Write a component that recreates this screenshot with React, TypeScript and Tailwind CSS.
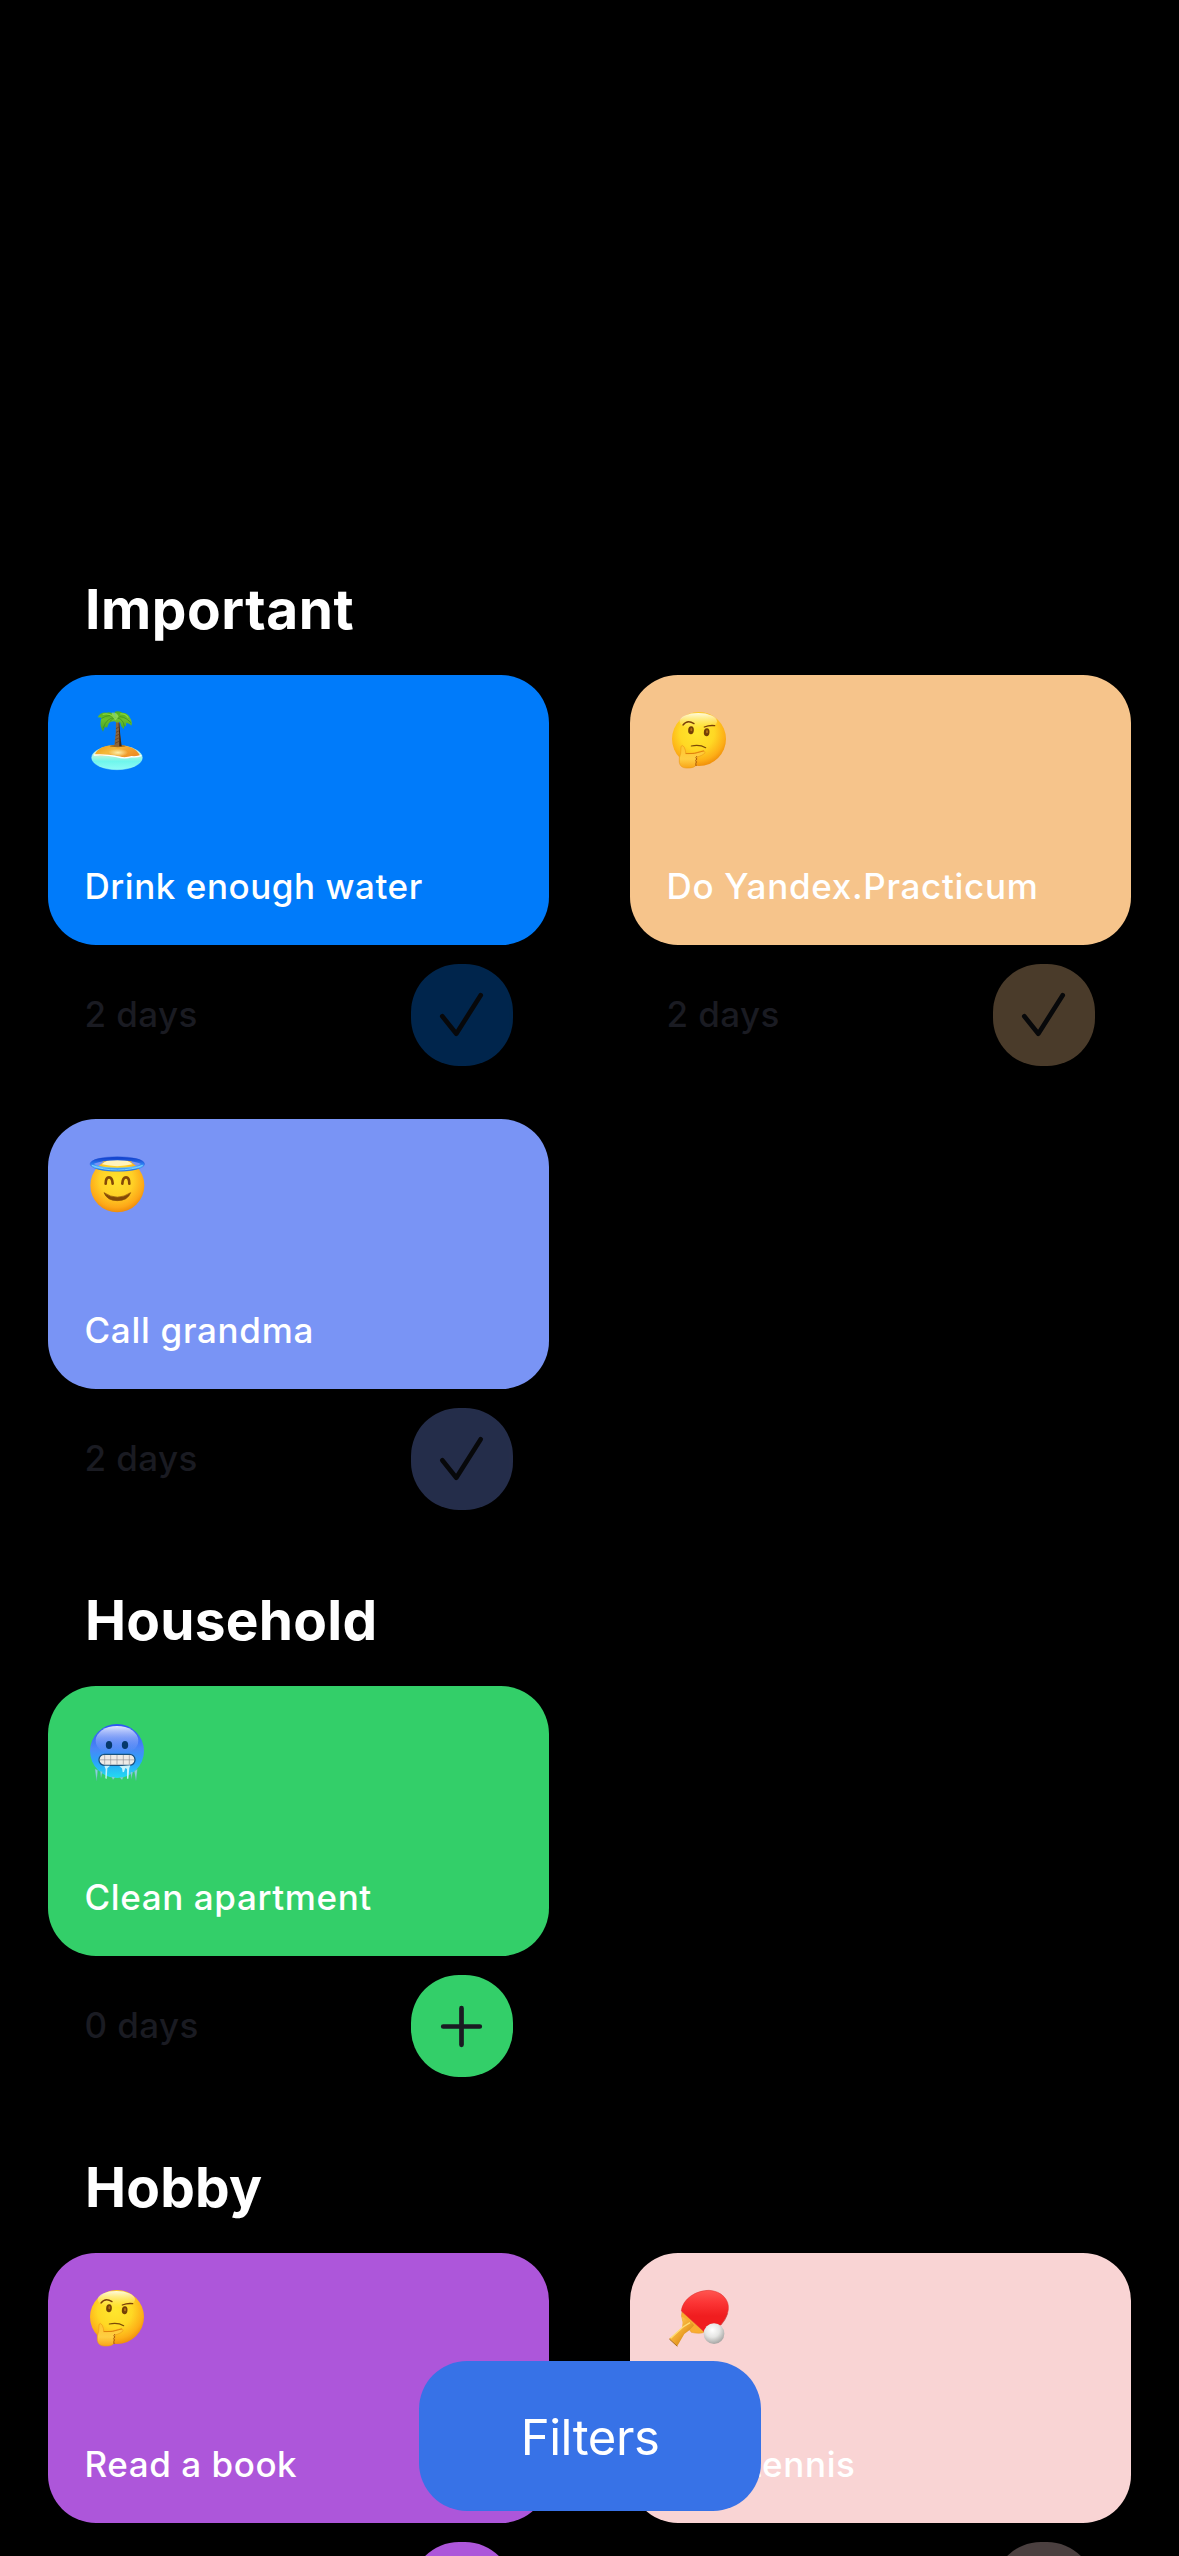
import type { ReactNode } from 'react';

function Island() {
  return (
    <svg role="img" aria-label="Desert island" viewBox="42 63 216 216" className="size-[72px]">
      <defs>
        <linearGradient id="isl-sea" x1="0" y1="0" x2="0" y2="1">
          <stop offset="0.3" stopColor="#d9f3d6" />
          <stop offset="0.65" stopColor="#6ff6ec" />
          <stop offset="1" stopColor="#8ffbf6" />
        </linearGradient>
        <linearGradient id="isl-sand" x1="0" y1="0" x2="1" y2="0.5">
          <stop offset="0" stopColor="#e8940c" />
          <stop offset="0.45" stopColor="#f5b93c" />
          <stop offset="1" stopColor="#ef8f24" />
        </linearGradient>
        <linearGradient id="isl-leaf" x1="0" y1="0" x2="0" y2="1">
          <stop offset="0" stopColor="#4fae1c" />
          <stop offset="0.4" stopColor="#6cc02c" />
          <stop offset="1" stopColor="#3fa02a" />
        </linearGradient>
        <radialGradient id="isl-glow">
          <stop offset="0" stopColor="#fdf0ad" />
          <stop offset="1" stopColor="#fdf0ad" stopOpacity="0" />
        </radialGradient>
      </defs>
      <ellipse cx="141" cy="203" rx="76" ry="36" fill="url(#isl-sea)" stroke="#9cf3f5" strokeWidth="1.5" />
      <path d="M74 194 Q86 164 142 164 Q198 166 210 198 Q196 202 186 199 Q172 208 152 200 Q120 192 98 197 Z" fill="url(#isl-sand)" />
      <ellipse cx="144" cy="188" rx="30" ry="12" fill="url(#isl-glow)" />
      <path d="M73 195 Q112 193 140 200 Q164 207 185 200 Q200 202 213 197" fill="none" stroke="#fff" strokeWidth="4" strokeLinecap="round" />
      <ellipse cx="143" cy="168" rx="24" ry="3.5" fill="#7d4a14" opacity="0.7" />
      <path d="M138 90 L147 90 Q149 130 154 169 L133 169 Q139 130 138 90Z" fill="#8a643c" />
      <path d="M148 100 Q150 135 155 169 L148 169 Q148 130 146 100Z" fill="#3f2410" />
      <path d="M138 116l9-5M138 127l10-5M137 138l12-6M136 149l14-7M135 160l16-8" stroke="#5a3a1c" strokeWidth="2" />
      <path d="M139 86 Q128 62 110 68 Q90 66 83 82 L95 83 Q90 94 92 108 Q94 116 99 125 L105 110 L111 113 L117 99 L123 95 L133 94 L141 98 L150 95 Q152 109 161 118 L164 107 L168 109 L169 98 Q180 101 184 107 Q189 96 180 83 Q173 68 157 68 Q146 62 134 65Z" fill="url(#isl-leaf)" />
      <path d="M139 83 Q118 70 95 85 M139 83 Q111 80 99 115 M141 83 Q158 73 183 98 M142 84 Q160 87 163 109 M139 82 Q126 86 119 95" fill="none" stroke="#2b7a1a" strokeWidth="1.5" />
      <path d="M125 68 Q141 66 146 81 L136 91 Q125 80 125 68Z" fill="#9ae05c" opacity="0.75" />
      <path d="M98 73 Q116 68 129 79 M151 72 Q166 70 175 83" fill="none" stroke="#8ad53d" strokeWidth="4" />
    </svg>
  );
}

function Thinking() {
  return (
    <svg role="img" aria-label="Thinking face" viewBox="48 63 216 216" className="size-[72px]">
      <defs>
        <radialGradient id="thk-face" cx="0.46" cy="0.38" r="0.64">
          <stop offset="0" stopColor="#ffe72e" />
          <stop offset="0.5" stopColor="#ffd824" />
          <stop offset="0.82" stopColor="#fdae17" />
          <stop offset="1" stopColor="#ee8b08" />
        </radialGradient>
        <linearGradient id="thk-shine" x1="0" y1="0" x2="0" y2="1">
          <stop offset="0" stopColor="#fffbe0" />
          <stop offset="1" stopColor="#fff06a" stopOpacity="0" />
        </linearGradient>
        <linearGradient id="thk-hand" x1="0" y1="0" x2="0" y2="1">
          <stop offset="0" stopColor="#ffc52e" />
          <stop offset="0.6" stopColor="#ffce42" />
          <stop offset="1" stopColor="#f8a519" />
        </linearGradient>
      </defs>
      <circle cx="147" cy="147" r="81" fill="url(#thk-face)" />
      <ellipse cx="145" cy="94" rx="56" ry="25" fill="url(#thk-shine)" />
      <path d="M99 105 Q112 88 132 101" fill="none" stroke="#7a3e08" strokeWidth="4" strokeLinecap="round" />
      <path d="M163 111 Q178 105 194 107" fill="none" stroke="#7a3e08" strokeWidth="4" strokeLinecap="round" />
      <ellipse cx="123" cy="121" rx="8.5" ry="12" fill="#744006" transform="rotate(5 123 121)" />
      <ellipse cx="170" cy="127" rx="8.5" ry="12" fill="#744006" transform="rotate(5 170 127)" />
      <ellipse cx="124" cy="119" rx="3" ry="5" fill="#b27016" />
      <ellipse cx="171" cy="125" rx="3" ry="5" fill="#b27016" />
      <path d="M124 168 Q148 162 167 173" fill="none" stroke="#7a4a08" strokeWidth="3.5" strokeLinecap="round" />
      <path d="M93 169 Q98 163 103 172 Q108 184 107 190 Q124 193 156 183 Q168 182 164 190 Q158 196 142 201 L139 224 Q134 235 109 234 Q91 234 88 217 Q86 203 92 190Z" fill="url(#thk-hand)" stroke="#ef9c16" strokeWidth="2" />
      <path d="M108 191 Q132 194 161 183" fill="none" stroke="#dc7808" strokeWidth="2.5" strokeLinecap="round" />
      <path d="M140 199 q-5 4 0 8 q-5 4 -1 9 q-3 4 -1 11" fill="none" stroke="#a95205" strokeWidth="3" strokeLinecap="round" />
    </svg>
  );
}

function Halo() {
  return (
    <svg role="img" aria-label="Smiling face with halo" viewBox="42 60 216 216" className="size-[72px]">
      <defs>
        <radialGradient id="hal-face" cx="0.48" cy="0.4" r="0.62">
          <stop offset="0" stopColor="#ffe22c" />
          <stop offset="0.5" stopColor="#ffd026" />
          <stop offset="0.82" stopColor="#fda818" />
          <stop offset="1" stopColor="#ec8608" />
        </radialGradient>
        <linearGradient id="hal-ring" x1="0" y1="0" x2="0" y2="1">
          <stop offset="0" stopColor="#1747cf" />
          <stop offset="0.5" stopColor="#2c7df2" />
          <stop offset="0.8" stopColor="#62c0ff" />
          <stop offset="1" stopColor="#2d86ef" />
        </linearGradient>
      </defs>
      <circle cx="142" cy="151" r="81" fill="url(#hal-face)" />
      <path d="M95 88 Q112 71 142 71 Q172 71 188 88 Q142 99 95 88Z" fill="#fff4bd" />
      <path d="M98 80 Q118 71 142 71 Q165 71 185 80" fill="none" stroke="#f0bc3d" strokeWidth="4" />
      <ellipse cx="142" cy="87" rx="76" ry="16.5" fill="none" stroke="url(#hal-ring)" strokeWidth="11" />
      <path d="M66 91 Q98 105 142 105 Q188 105 218 91" fill="none" stroke="#7bd4ff" strokeWidth="3" />
      <ellipse cx="142" cy="87" rx="82" ry="22" fill="none" stroke="#1f53d8" strokeWidth="1.5" opacity="0.7" />
      <path d="M107 146 Q107 127 117 127 Q127 127 128 146" fill="none" stroke="#844907" strokeWidth="8" strokeLinecap="round" />
      <path d="M157 146 Q158 127 168 127 Q178 127 178 146" fill="none" stroke="#844907" strokeWidth="8" strokeLinecap="round" />
      <path d="M102 173 Q142 200 182 173 Q173 197 142 197 Q111 197 102 173Z" fill="#844907" stroke="#844907" strokeWidth="2" strokeLinejoin="round" />
    </svg>
  );
}

function Cold() {
  return (
    <svg role="img" aria-label="Cold face" viewBox="42 66 216 216" className="size-[72px]">
      <defs>
        <linearGradient id="cld-face" x1="0" y1="0" x2="0" y2="1">
          <stop offset="0" stopColor="#2b55f2" />
          <stop offset="0.45" stopColor="#4a86f6" />
          <stop offset="0.7" stopColor="#2ba3fa" />
          <stop offset="1" stopColor="#22dcf2" />
        </linearGradient>
        <linearGradient id="cld-shine" x1="0" y1="0" x2="0" y2="1">
          <stop offset="0" stopColor="#dfe6ff" />
          <stop offset="0.4" stopColor="#a8bcf9" stopOpacity="0.6" />
          <stop offset="0.9" stopColor="#7fa4f7" stopOpacity="0" />
        </linearGradient>
      </defs>
      <circle cx="141" cy="153" r="81" fill="url(#cld-face)" />
      <ellipse cx="141" cy="122" rx="64" ry="44" fill="url(#cld-shine)" />
      <ellipse cx="117" cy="135" rx="9.5" ry="12" fill="#06386b" />
      <ellipse cx="165" cy="135" rx="9.5" ry="12" fill="#06386b" />
      <rect x="87" y="163" width="108" height="33" rx="16" fill="#edeae6" stroke="#175280" strokeWidth="4" />
      <path d="M89 179.500H193M104 165v29M122 165v29M141 165v29M160 165v29M178 165v29" stroke="#8c8b91" strokeWidth="1.800" />
      <path d="M103 197 L120 197 L112 205 L110 237 L106 235 L107 208Z M148 199 L181 196 L178 204 L175 236 L171 236 L171 207 L166 204 L162 216 L158 217 L156 205Z" fill="#c5f3fb" />
      <path d="M75 207 L80 242 L83 211Z M91 214 L93 233 L97 215Z M193 213 L198 242 L202 208Z M182 216 L184 236 L188 216Z M125 230 L129 239 L135 232Z M149 232 L156 239 L160 232Z" fill="#8fd0dc" stroke="#62aeb8" strokeWidth="0.800" />
    </svg>
  );
}

function PingPong() {
  return (
    <svg role="img" aria-label="Ping pong" viewBox="48 57 216 216" className="size-[72px]">
      <defs>
        <linearGradient id="png-red" x1="0" y1="0" x2="0" y2="1">
          <stop offset="0" stopColor="#ff5550" />
          <stop offset="0.3" stopColor="#fb3434" />
          <stop offset="0.6" stopColor="#f01d1f" />
        </linearGradient>
        <linearGradient id="png-wood" x1="0" y1="0" x2="1" y2="1">
          <stop offset="0.2" stopColor="#ffca52" />
          <stop offset="0.55" stopColor="#eda22a" />
          <stop offset="0.8" stopColor="#c98014" />
        </linearGradient>
        <radialGradient id="png-ball" cx="0.42" cy="0.32" r="0.7">
          <stop offset="0" stopColor="#fff" />
          <stop offset="0.5" stopColor="#e6e6e4" />
          <stop offset="1" stopColor="#a3a2a0" />
        </radialGradient>
      </defs>
      <path d="M96 124 L164 186 Q150 193 124 187 L98 152 Q92 138 96 124Z" fill="#f9ad30" stroke="#e39422" strokeWidth="1.500" />
      <path d="M96 140 L127 159 L132 166 Q118 184 103 192 L82 228 L58 206 L96 173 Q99 158 96 140Z" fill="url(#png-wood)" />
      <path d="M62 205 L99 171 L120 158" fill="none" stroke="#ffdd74" strokeWidth="4" />
      <path d="M58 207 L82 229" stroke="#a96812" strokeWidth="3" />
      <path d="M94 123 C98 86 138 61 177 61 C215 63 239 90 235 119 C231 141 222 152 212 165 L190 186 Q173 192 163 186 Z" fill="url(#png-red)" stroke="#dc3532" strokeWidth="1.500" />
      <path d="M233 130 Q226 152 213 165" fill="none" stroke="#b93835" strokeWidth="3" opacity="0.5" />
      <circle cx="192" cy="191" r="31" fill="url(#png-ball)" />
    </svg>
  );
}

function Check() {
  return (
    <svg viewBox="0 0 102 102" className="size-full" fill="none" stroke="#1a1b22" strokeWidth="4.700" strokeLinecap="round" strokeLinejoin="round">
      <path d="M31.300 52.300 45.300 69.700 69.700 31.300" />
    </svg>
  );
}

function Plus() {
  return (
    <svg viewBox="0 0 102 102" className="size-full" fill="none" stroke="#1a1b22" strokeWidth="4.700" strokeLinecap="round">
      <path d="M32.200 51.500H68.800M50.500 33.200V69.800" />
    </svg>
  );
}

type Tracker = { title: string; spacing: string; days?: string; color: string; emoji: ReactNode; done: boolean };

const sections: { title: string; spacing: string; trackers: Tracker[] }[] = [
  {
    title: 'Important',
    spacing: 'tracking-[0.55px]',
    trackers: [
      { title: 'Drink enough water', spacing: 'tracking-[0.55px]', days: '2 days', color: 'bg-[#007bfa]', emoji: <Island />, done: true },
      { title: 'Do Yandex.Practicum', spacing: 'tracking-[0.7px]', days: '2 days', color: 'bg-[#f6c48b]', emoji: <Thinking />, done: true },
      { title: 'Call grandma', spacing: 'tracking-[0.7px]', days: '2 days', color: 'bg-[#7994f5]', emoji: <Halo />, done: true },
    ],
  },
  {
    title: 'Household',
    spacing: 'tracking-[0.24px]',
    trackers: [
      { title: 'Clean apartment', spacing: 'tracking-[0.62px]', days: '0 days', color: 'bg-[#33cf69]', emoji: <Cold />, done: false },
    ],
  },
  {
    title: 'Hobby',
    spacing: 'tracking-[0.2px]',
    trackers: [
      { title: 'Read a book', spacing: 'tracking-[0.55px]', color: 'bg-[#ad56da]', emoji: <Thinking />, done: false },
      { title: 'Play tennis', spacing: 'tracking-[0.65px]', color: 'bg-[#f9d4d4]', emoji: <PingPong />, done: true },
    ],
  },
];

function TrackerCell({ title, spacing, days, color, emoji, done }: Tracker) {
  return (
    <article className="h-[444px]">
      <div className={`flex h-[270px] flex-col justify-between rounded-[48px] px-9 pt-9 pb-[37px] ${color}`}>
        {emoji}
        <p className={`pl-[0.5px] text-[35px] leading-[44px] font-medium whitespace-nowrap text-white ${spacing}`}>{title}</p>
      </div>
      <div className="mt-[19px] flex items-center justify-between px-9">
        <p className="mb-0.5 pl-[0.5px] text-[35px] leading-[44px] font-medium tracking-[0.4px] text-[#1a1b22]">{days}</p>
        <button aria-label={done ? 'Completed' : 'Complete'} className={`size-[102px] rounded-[48px] ${color} ${done ? 'opacity-30' : ''}`}>
          {done ? <Check /> : <Plus />}
        </button>
      </div>
    </article>
  );
}

export default function App() {
  return (
    <main className="relative h-[2556px] w-[1179px] overflow-hidden bg-black pt-[552px] font-['Inter',sans-serif]">
      {sections.map((section) => (
        <section key={section.title} className="px-12">
          <h2 className={`flex h-[123px] items-end pb-9 pl-[37px] text-[55px] leading-[60px] font-bold text-white ${section.spacing}`}>
            {section.title}
          </h2>
          <div className="grid grid-cols-[501px_501px] gap-x-[81px]">
            {section.trackers.map((tracker) => (
              <TrackerCell key={tracker.title} {...tracker} />
            ))}
          </div>
        </section>
      ))}
      <button className="absolute bottom-[45px] left-[419px] flex h-[150px] w-[342px] items-center justify-center rounded-[48px] bg-[#3772e7] pt-[3px] text-[49px] tracking-[-0.45px] text-white">
        Filters
      </button>
    </main>
  );
}
